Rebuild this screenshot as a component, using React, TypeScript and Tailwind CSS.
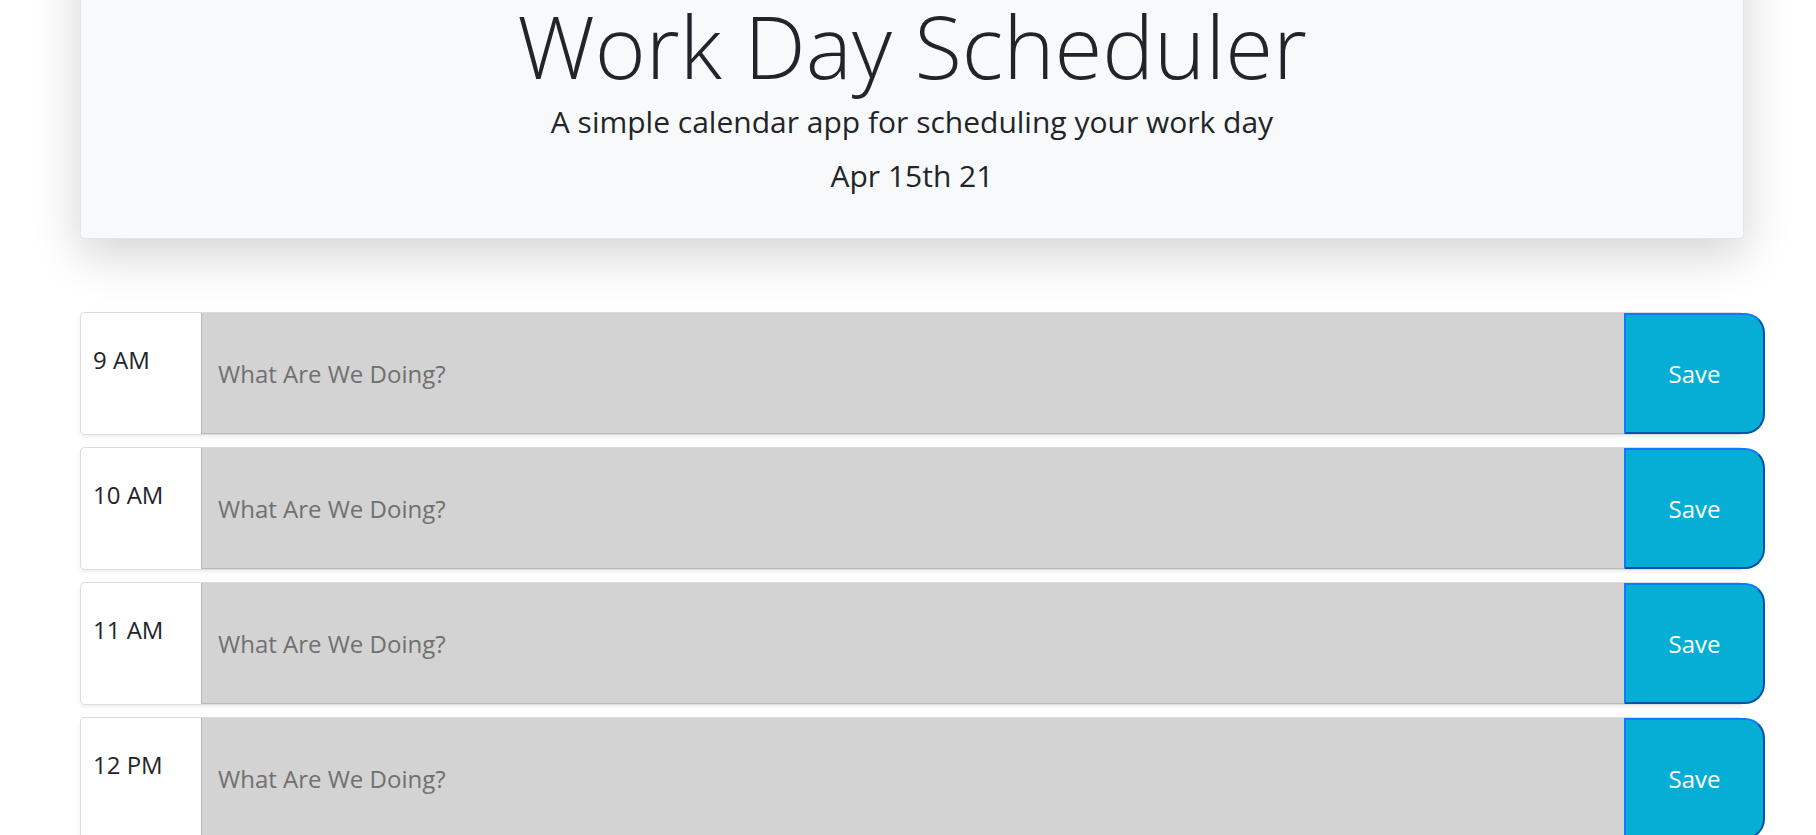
import React from "react";

const hours = ["9 AM", "10 AM", "11 AM", "12 PM", "1 PM", "2 PM", "3 PM", "4 PM", "5 PM"];

export default function App() {
  return (
    <div
      className="min-h-screen bg-white text-[#212529] overflow-hidden"
      style={{ fontFamily: '"Open Sans", "Noto Sans", sans-serif' }}
    >
      <div className="ml-[80px] w-[1664px]">
        <header className="mt-[-65px] pt-[66px] pb-[47px] bg-[#f8f9fa] rounded-[5px] border border-black/[0.08] shadow-[0_16px_48px_rgba(0,0,0,0.175)] text-center">
          <h1 className="text-[87px] leading-[87px] font-light">Work Day Scheduler</h1>
          <p className="mt-[18px] text-[30px] leading-[30px] font-normal">
            A simple calendar app for scheduling your work day
          </p>
          <p className="mt-[24px] text-[30px] leading-[30px] font-normal">Apr 15th 21</p>
        </header>

        <div className="mt-[73px] flex flex-col gap-[12px] pb-10">
          {hours.map((h) => (
            <div
              key={h}
              className="flex h-[123px] w-[1664px] border border-[#dcdcdc] rounded-[5px] bg-white shadow-[0_2px_4px_rgba(0,0,0,0.075)]"
            >
              <div className="w-[120px] flex-none pt-[35px] px-[12px] text-[24px] leading-[24px] text-[#212529] rounded-l-[5px]">
                {h}
              </div>
              <input
                className="w-[1423px] flex-none h-full bg-[#d3d3d3] border-l border-b border-l-[#b4b4b4] border-b-[#b9b9b9] pl-[16px] text-[24px] text-black placeholder:text-[#707070] outline-none"
                placeholder="What Are We Doing?"
                style={{ fontFamily: '"Open Sans", "Noto Sans", sans-serif' }}
              />
              <button
                className="w-[141px] flex-none h-full bg-[#06aed5] text-white text-[24px] border-2 border-t-[#0a7cff] border-l-[#0a7cff] border-r-[#0152ad] border-b-[#0152ad] rounded-r-[20px]"
                style={{ fontFamily: '"Open Sans", "Noto Sans", sans-serif' }}
              >
                Save
              </button>
            </div>
          ))}
        </div>
      </div>
    </div>
  );
}
